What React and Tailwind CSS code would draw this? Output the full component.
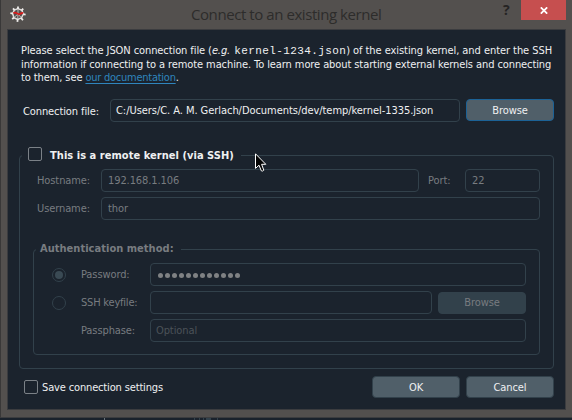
import clsx from "clsx";

function Field({ className, children }) {
  return (
    <div className={clsx("flex h-[23px] items-center rounded-[4px] border border-[#32414b] pt-[2px] whitespace-pre", className)}>
      {children}
    </div>
  );
}

function Button({ className, children }) {
  return (
    <button type="button" className={clsx("flex h-[22px] w-[88px] shrink-0 items-center justify-center rounded-[4px] border pt-[2px]", className)}>
      {children}
    </button>
  );
}

function CheckBox() {
  return <span className="block h-[14px] w-[14px] shrink-0 rounded-[2px] border border-[#7b8187]" />;
}

function Radio({ checked }) {
  return (
    <span className="flex h-[14px] w-[14px] shrink-0 items-center justify-center rounded-full border border-[#32414b]">
      {checked && <span className="h-2 w-2 rounded-full bg-[#3a4a54]" />}
    </span>
  );
}

function Logo() {
  return (
    <svg width="16" height="16" viewBox="0 0 16 16" fill="none">
      <path d="M8 2.6 11.9 4.3 13.3 8.3 11.4 12 7.6 13.4 3.9 11.7 2.6 7.6 4.4 4Z" stroke="#dddbd9" strokeWidth="1.5" />
      <path d="M8 .4V3M13.2 2.6 11.6 4.5M15.6 8.6 13.2 8.2M12.9 14.2 11.2 12M7.4 15.8 7.7 13.2M2.2 13.2 4 11.5M.4 7.2 3 7.6M3 2.3 4.6 4.2" stroke="#eeecea" strokeWidth="1.8" />
      <path d="M8 8l-3.8 3.3M8 8l3.2 3.6M8 8 7.7 13M8 8V3" stroke="#c8c4c2" strokeWidth=".9" />
      <path d="M3.4 7.2C4.6 6.4 6 6.6 7 7.4s2.3 1.2 3.3.4 1.6-1.2 2.9-.6" stroke="#d61c1c" strokeWidth="1.8" />
    </svg>
  );
}

function Cursor() {
  return (
    <svg className="absolute left-[255px] top-[153px]" width="12" height="20" viewBox="0 0 12 20">
      <path d="M.5.8V15.4L4 12.2 6.3 17.8Q7.5 18.6 8.8 17.2L6.6 11.3H10.8Z" fill="#050505" stroke="#fff" strokeWidth="1" />
    </svg>
  );
}

export default function App() {
  return (
    <div className="relative flex h-[420px] w-[572px] flex-col overflow-hidden bg-[#1a222c] font-['DejaVu_Sans_Condensed','DejaVu_Sans',sans-serif] text-[11px] tracking-[-0.1px] text-[#eff0f1]">
      <div className="flex h-[418px] flex-col border-b border-l border-b-[#3c3d3f] border-l-[#393838] bg-[#53504e] pr-[6px] pb-[7px] pl-[6px]">
        <header className="flex h-[29px] shrink-0 items-start">
          <div className="pt-[6px] pl-[3px]">
            <Logo />
          </div>
          <h1 className="ml-[165px] w-[310px] pt-[4px] font-['Open_Sans',sans-serif] text-[15px] leading-5 font-normal tracking-[-0.43px] whitespace-nowrap text-[#2d2c2b]">
            Connect to an existing kernel
          </h1>
          <span className="w-[20px] pl-[2px] font-['Open_Sans',sans-serif] text-[14px] leading-5 font-bold text-[#252424]">?</span>
          <div className="flex h-5 w-[45px] shrink-0 items-center justify-center bg-[#c64f4f]">
            <svg width="8" height="7" viewBox="0 0 8 7">
              <path d="M.8.3 7.2 6.7M7.2.3.8 6.7" stroke="#fff" strokeWidth="1.7" />
            </svg>
          </div>
        </header>

        <main className="flex min-h-0 w-[559px] flex-1 flex-col border border-[#3b3c3f] bg-[#1b232d] pt-[14px] pr-[11px] pl-[12px]">
          <div className="ml-px whitespace-pre">
            <p className="flex h-[14px] items-center">
              <span className="tracking-[-0.09px]">Please select the JSON connection file (</span>
              <i>e.g.</i>
              <span className="ml-[4px] font-['Liberation_Mono',monospace] text-[11px] tracking-[0.4px]">kernel-1234.json</span>
              <span className="tracking-[-0.06px]">) of the existing kernel, and enter the SSH</span>
            </p>
            <p className="flex h-[14px] items-center tracking-[-0.09px]">information if connecting to a remote machine. To learn more about starting external kernels and connecting</p>
            <p className="flex h-[13px] items-center">
              to them, see <a className="text-[#2f85bd] underline underline-offset-2 tracking-[-0.25px]">our documentation</a>.
            </p>
          </div>

          <div className="mt-[14px] flex h-[23px]">
            <label className="w-[90px] pt-[6px] pl-[3px] leading-[14px] whitespace-nowrap">Connection file:</label>
            <Field className="w-[350px] pl-[5px]">
              <span className="tracking-[-0.05px]">C:/Users/C. A. M. Gerlach/Documents/dev/temp/kernel-1335.json</span>
            </Field>
            <Button className="ml-[6px] border-[#1c6296] bg-[#505f69]">Browse</Button>
          </div>

          <section className="-ml-px mt-[25px] flex h-[222px] w-[535px] flex-col">
            <div className="z-10 -mb-[8px] ml-[3px] flex h-[16px] shrink-0 items-start self-start bg-[#1b232d] pr-[7px] pl-[6px]">
              <CheckBox />
              <b className="ml-[8px] w-[184px] pt-px leading-[15px] tracking-[0.04px] whitespace-nowrap">This is a remote kernel (via SSH)</b>
            </div>
            <div className="flex min-h-0 flex-1 flex-col rounded-[4px] border border-[#32414b] px-[13px] pt-[13px] text-[#787c80]">
              <div className="flex h-[23px] items-center">
                <label className="w-[68px] pt-[2px] pl-[4px]">Hostname:</label>
                <Field className="w-[318px] pl-[6px]">192.168.1.106</Field>
                <label className="w-[46px] pt-[2px] pl-[9px]">Port:</label>
                <Field className="w-[75px] pl-[6px]">22</Field>
              </div>
              <div className="mt-[5px] flex h-[23px] items-center">
                <label className="w-[68px] pt-[2px] pl-[4px]">Username:</label>
                <Field className="w-[439px] pl-[6px]">thor</Field>
              </div>

              <div className="mt-[21px] flex h-[114px] shrink-0 flex-col">
                <b className="z-10 -mb-[8px] ml-[3px] flex h-[16px] shrink-0 items-center self-start bg-[#1b232d] pr-[7px] pl-[4px] tracking-[0.03px]">
                  Authentication method:
                </b>
                <div className="flex min-h-0 flex-1 flex-col gap-[5px] rounded-[4px] border border-[#32414b] pt-[13px] pl-[18px]">
                  <div className="flex h-[23px] items-center">
                    <Radio checked />
                    <label className="ml-[15px] w-[69px] pt-[2px]">Password:</label>
                    <Field className="w-[376px] gap-[2px] pl-[7px]">
                      {Array.from({ length: 12 }, (_, i) => (
                        <span key={i} className="h-[5px] w-[5px] rounded-full bg-[#7f8183]" />
                      ))}
                    </Field>
                  </div>
                  <div className="flex h-[23px] items-center">
                    <Radio />
                    <label className="ml-[15px] w-[69px] pt-[2px] tracking-[-0.2px]">SSH keyfile:</label>
                    <Field className="w-[282px]" />
                    <Button className="ml-[6px] border-[#32414b] bg-[#32414b]">Browse</Button>
                  </div>
                  <div className="flex h-[23px] items-center">
                    <label className="ml-[29px] w-[69px] pt-[2px]">Passphase:</label>
                    <Field className="w-[376px] pl-[5px] text-[#4b5258]">Optional</Field>
                  </div>
                </div>
              </div>
            </div>
          </section>

          <footer className="mt-[7px] flex h-[22px] items-center">
            <div className="ml-[4px] flex w-[348px] items-center gap-[4px]">
              <CheckBox />
              <span className="pt-[2px] tracking-[-0.15px]">Save connection settings</span>
            </div>
            <Button className="border-[#32414b] bg-[#505f69]">OK</Button>
            <Button className="ml-[6px] border-[#32414b] bg-[#505f69]">Cancel</Button>
          </footer>
        </main>
      </div>
      <div className="flex h-[2px] items-start pl-[104px]">
        <span className="h-[2px] w-px bg-[#6b747b]" />
        <span className="ml-[89px] h-[2px] w-px bg-[#32414b]" />
        <span className="ml-[4px] h-[2px] w-px bg-[#32414b]" />
        <span className="ml-[3px] h-[2px] w-px bg-[#32414b]" />
        <span className="ml-[2px] h-[2px] w-[5px] bg-[#32414b]" />
        <span className="ml-[6px] h-[2px] w-px bg-[#32414b]" />
      </div>
      <Cursor />
    </div>
  );
}
